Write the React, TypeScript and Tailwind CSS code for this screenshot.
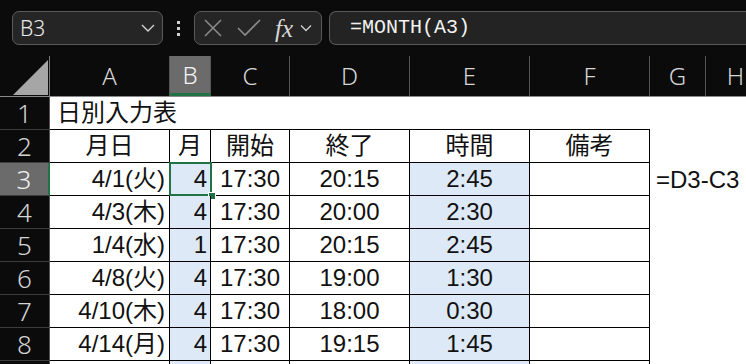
import React from 'react';

const cols = [
  { key: 'A', w: 'w-[120px]' },
  { key: 'B', w: 'w-[41px]' },
  { key: 'C', w: 'w-[79px]' },
  { key: 'D', w: 'w-[120px]' },
  { key: 'E', w: 'w-[120px]' },
  { key: 'F', w: 'w-[120px]' },
  { key: 'G', w: 'w-[56px]' },
  { key: 'H', w: 'w-[60px]' },
];

const data = [
  ['4/1(火)', '4', '17:30', '20:15', '2:45'],
  ['4/3(木)', '4', '17:30', '20:00', '2:30'],
  ['1/4(水)', '1', '17:30', '20:15', '2:45'],
  ['4/8(火)', '4', '17:30', '19:00', '1:30'],
  ['4/10(木)', '4', '17:30', '18:00', '0:30'],
  ['4/14(月)', '4', '17:30', '19:15', '1:45'],
  ['', '', '', '', ''],
];

const sheetFont = "font-['Liberation_Sans','Noto_Sans_CJK_JP',sans-serif]";
const uiFont = "font-['Noto_Sans',sans-serif]";

function RowHeader({ n, active }: { n: number; active?: boolean }) {
  return (
    <div
      className={`flex w-[50px] shrink-0 items-center justify-center border-b border-[#3d3d3d] ${uiFont} text-[26px] font-light leading-none ${
        active ? 'border-r-2 border-r-[#217346] bg-[#6b6b6b] text-[#f2f2f2]' : 'border-r border-r-[#555] bg-[#0b0b0b] text-[#d4d4d4]'
      }`}
    >
      {n}
    </div>
  );
}

function Toolbar() {
  return (
    <div className="flex h-[56px] items-start bg-[#0b0b0b] pl-[12px] pt-[11px]">
      <div className="flex h-[34px] w-[151px] items-center justify-between rounded-[7px] border border-[#5a5a5a] bg-[#252525] pl-[7px] pr-[7px]">
        <span className={`${uiFont} text-[21px] font-light leading-none text-[#ececec]`}>B3</span>
        <svg width="14" height="10" viewBox="0 0 14 10" fill="none" stroke="#d2d2d2" strokeWidth="1.4">
          <path d="M1 2l6 6 6-6" />
        </svg>
      </div>
      <div className="flex h-[34px] w-[31px] flex-col items-center justify-center gap-[3px]">
        <span className="h-[3px] w-[3px] bg-[#d0d0d0]" />
        <span className="h-[3px] w-[3px] bg-[#d0d0d0]" />
        <span className="h-[3px] w-[3px] bg-[#d0d0d0]" />
      </div>
      <div className="flex h-[34px] w-[128px] items-center rounded-[7px] border border-[#5a5a5a] bg-[#252525] pl-[8px]">
        <svg width="20" height="20" viewBox="0 0 20 20" fill="none" stroke="#8a8a8a" strokeWidth="1.6">
          <path d="M2 2l16 16M18 2L2 18" />
        </svg>
        <svg className="ml-[14px]" width="24" height="18" viewBox="0 0 24 18" fill="none" stroke="#8a8a8a" strokeWidth="1.6">
          <path d="M1 9l7 7L23 1" />
        </svg>
        <span className="ml-[14px] font-['Liberation_Serif',serif] text-[25px] italic leading-none text-[#d8d8d8]">fx</span>
        <svg className="ml-[7px]" width="12" height="8" viewBox="0 0 12 8" fill="none" stroke="#cfcfcf" strokeWidth="1.3">
          <path d="M1 1.5l5 5 5-5" />
        </svg>
      </div>
      <div className="ml-[7px] flex h-[34px] flex-1 items-center rounded-l-[7px] border border-r-0 border-[#5a5a5a] bg-[#232323] pl-[20px]">
        <span className="font-['Liberation_Mono',monospace] text-[20px] leading-none text-[#f2f2f2]">=MONTH(A3)</span>
      </div>
    </div>
  );
}

function ColumnHeader() {
  return (
    <div className="flex h-[41px] border-b border-[#8a8a8a] bg-[#0b0b0b]">
      <div className="relative w-[50px] shrink-0 border-r border-[#777]">
        <svg className="absolute left-[13px] top-[4px]" width="35" height="35" viewBox="0 0 35 35">
          <path d="M35 0V35H0Z" fill="#a6a6a6" />
        </svg>
      </div>
      {cols.map((c) => (
        <div
          key={c.key}
          className={`${c.w} flex shrink-0 items-center justify-center ${uiFont} text-[24px] font-light leading-none ${
            c.key === 'B'
              ? 'border-b-[3px] border-r border-b-[#217346] border-r-[#555] bg-[#6b6b6b] text-[#f4f4f4]'
              : 'border-r border-[#555] text-[#d6d6d6]'
          }`}
        >
          {c.key}
        </div>
      ))}
    </div>
  );
}

export default function App() {
  const headers = ['月日', '月', '開始', '終了', '時間', '備考'];
  return (
    <div className="h-[364px] w-[746px] overflow-hidden bg-white">
      <Toolbar />
      <ColumnHeader />
      <div className={`${sheetFont} text-[24px] leading-none text-[#111]`}>
        {/* row 1 */}
        <div className="flex h-[33px]">
          <RowHeader n={1} />
          <div className="flex w-[600px] shrink-0 items-center whitespace-nowrap border-b border-black pl-[7px]">日別入力表</div>
        </div>
        {/* row 2 */}
        <div className="flex h-[33px]">
          <RowHeader n={2} />
          {headers.map((h, i) => (
            <div key={h} className={`${cols[i].w} flex shrink-0 items-center justify-center border-b border-r border-black`}>
              {h}
            </div>
          ))}
        </div>
        {data.map((r, ri) => {
          const n = ri + 3;
          return (
            <div key={n} className="flex h-[33px]">
              <RowHeader n={n} active={n === 3} />
              <div className="flex w-[120px] shrink-0 items-center justify-end border-b border-r border-black pr-[4px]">{r[0]}</div>
              <div className="relative flex w-[41px] shrink-0 items-center justify-end border-b border-r border-black bg-[#dde9f6] pr-[3px]">
                {r[1]}
                {n === 3 && (
                  <>
                    <div className="pointer-events-none absolute -left-px -top-px bottom-[-1px] right-[-2px] border-2 border-[#217346]" />
                    <div className="absolute bottom-[-5px] right-[-6px] h-[8px] w-[8px] border border-white bg-[#217346]" />
                  </>
                )}
              </div>
              <div className="flex w-[79px] shrink-0 items-center justify-center border-b border-r border-black">{r[2]}</div>
              <div className="flex w-[120px] shrink-0 items-center justify-center border-b border-r border-black">{r[3]}</div>
              <div className="flex w-[120px] shrink-0 items-center justify-center border-b border-r border-black bg-[#dde9f6]">{r[4]}</div>
              <div className="w-[120px] shrink-0 border-b border-r border-black" />
              <div className="flex w-[56px] shrink-0 items-center whitespace-nowrap pl-[6px]">{n === 3 ? '=D3-C3' : ''}</div>
            </div>
          );
        })}
      </div>
    </div>
  );
}
